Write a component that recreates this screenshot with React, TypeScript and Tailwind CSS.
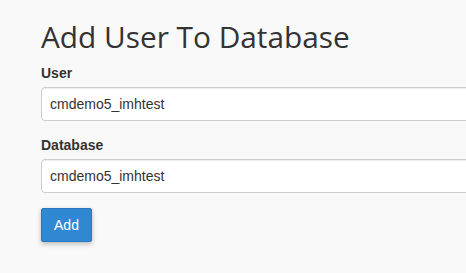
export default function App() {
  return (
    <div className="h-[273px] w-[466px] overflow-hidden bg-[#f9f9f9] pl-[41px] pt-[17px]">
      <h1 className="font-['Open_Sans',sans-serif] text-[29.8px] leading-[40px] text-[#333]">
        Add User To Database
      </h1>
      <form className="mt-[6px] font-['Liberation_Sans',Arial,sans-serif]">
        <label className="block text-[14px] font-bold leading-[20px] text-[#333]">User</label>
        <input
          readOnly
          value="cmdemo5_imhtest"
          className="mt-[4px] block h-[34px] w-[440px] rounded-[4px] border border-[#ccc] bg-white px-[8px] text-[14px] text-[#333] shadow-[inset_0_1px_1px_rgba(0,0,0,0.075)] outline-none"
        />
        <label className="mt-[14px] block text-[14px] font-bold leading-[20px] text-[#333]">Database</label>
        <input
          readOnly
          value="cmdemo5_imhtest"
          className="mt-[4px] block h-[34px] w-[440px] rounded-[4px] border border-[#ccc] bg-white px-[8px] text-[14px] text-[#333] shadow-[inset_0_1px_1px_rgba(0,0,0,0.075)] outline-none"
        />
        <button
          type="button"
          className="mt-[15px] h-[34px] w-[51px] rounded-[2px] border border-[#2a78c0] bg-[#3188d2] text-[14px] text-white shadow-[0_2px_5px_rgba(0,0,0,0.25)]"
        >
          Add
        </button>
      </form>
    </div>
  );
}
